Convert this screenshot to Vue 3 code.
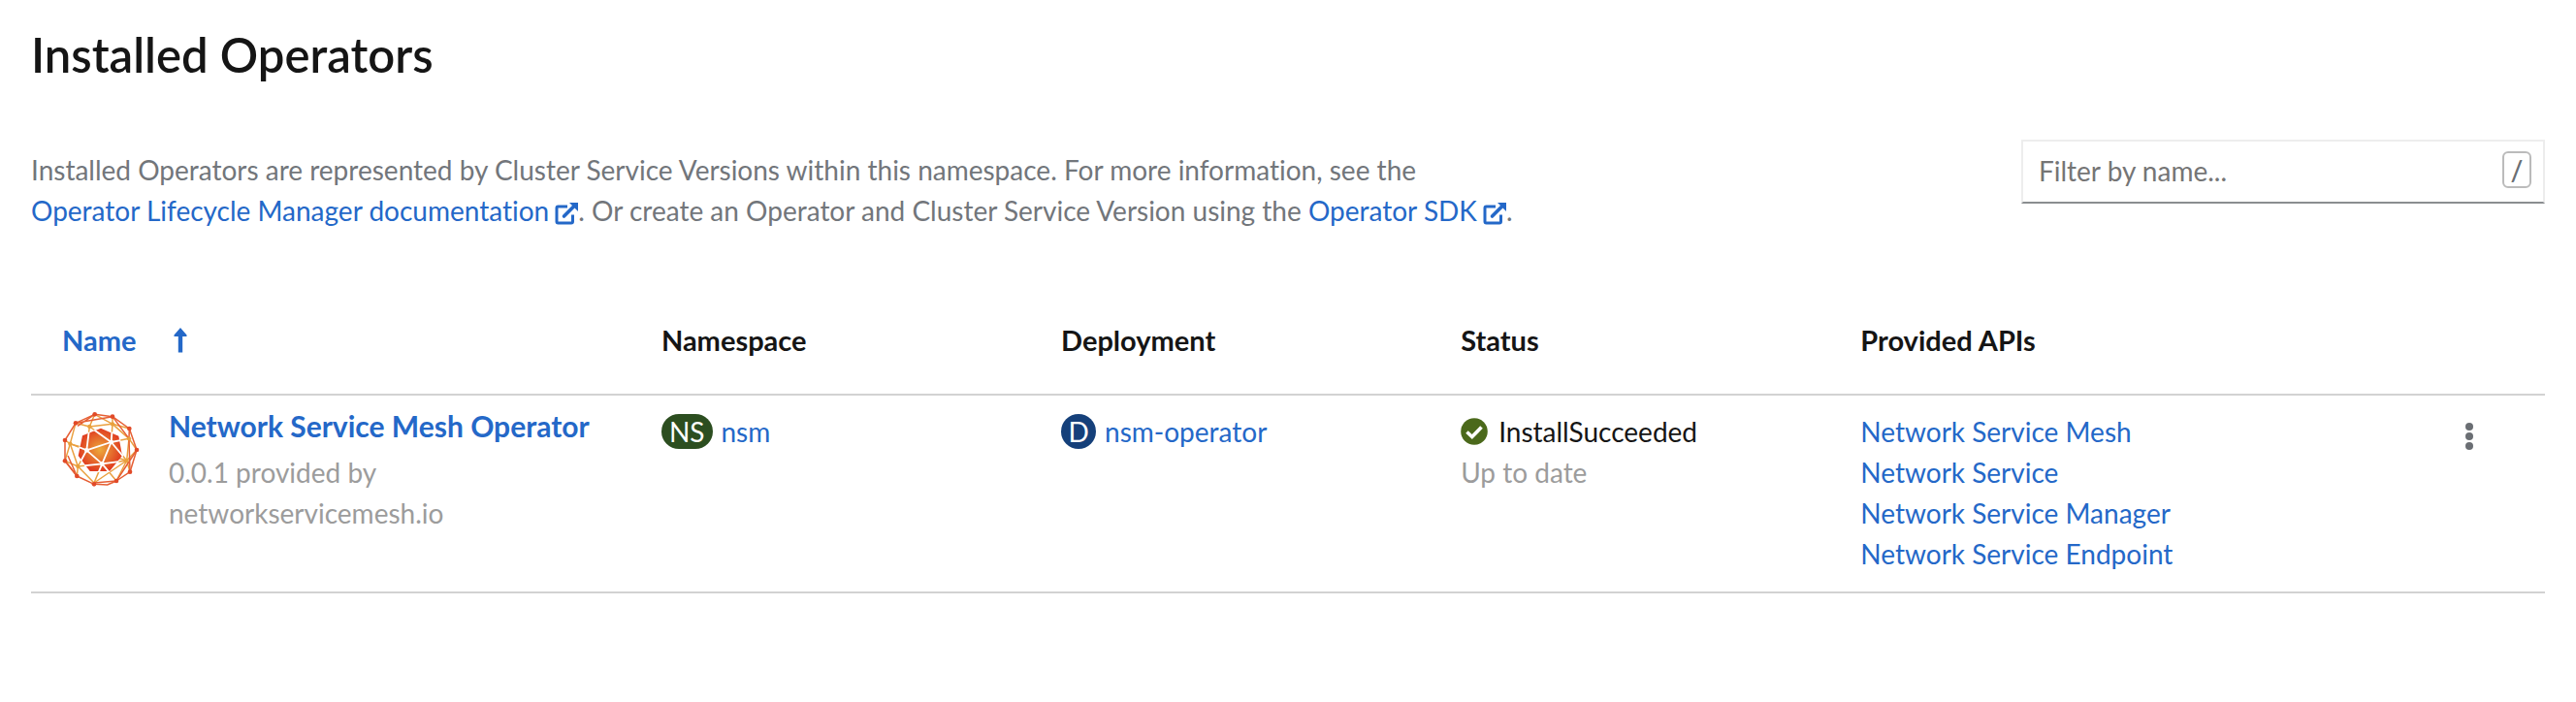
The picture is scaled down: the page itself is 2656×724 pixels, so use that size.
<script setup>
import { ref } from 'vue'

const filter = ref('')
const apis = [
  'Network Service Mesh',
  'Network Service',
  'Network Service Manager',
  'Network Service Endpoint',
]

const outer = [
  [113, 22], [168, 29], [220, 66], [243, 132], [222, 200], [180, 228],
  [111, 238], [58, 213], [21, 166], [21, 102], [54, 49],
]
const inner = [[97, 60], [168, 52], [219, 97], [212, 165], [61, 183], [37, 113]]
</script>

<template>
  <main class="page">
    <h1>Installed Operators</h1>

    <div class="intro">
      <p>
        Installed Operators are represented by Cluster Service Versions within this namespace. For more information, see the<br />
        <a href="#olm">Operator Lifecycle Manager documentation<svg class="ext" viewBox="0 0 24 24" aria-hidden="true"><path d="M13 5H3.500Q2 5 2 6.500V20.500Q2 22 3.500 22H17Q18.500 22 18.500 20.500V13.500" fill="none" stroke="currentColor" stroke-width="3" /><path d="M9.500 15L20 4.500" stroke="currentColor" stroke-width="3.600" stroke-linecap="round" /><path d="M15 1H24V10Z" fill="currentColor" /></svg></a>. Or create an Operator and Cluster Service Version using the
        <a href="#sdk">Operator SDK<svg class="ext" viewBox="0 0 24 24" aria-hidden="true"><path d="M13 5H3.500Q2 5 2 6.500V20.500Q2 22 3.500 22H17Q18.500 22 18.500 20.500V13.500" fill="none" stroke="currentColor" stroke-width="3" /><path d="M9.500 15L20 4.500" stroke="currentColor" stroke-width="3.600" stroke-linecap="round" /><path d="M15 1H24V10Z" fill="currentColor" /></svg></a>.
      </p>
      <div class="filter">
        <input v-model="filter" type="text" placeholder="Filter by name..." aria-label="Filter by name" />
        <kbd>/</kbd>
      </div>
    </div>

    <table>
      <colgroup>
        <col class="c-name" />
        <col class="c-mid" />
        <col class="c-mid" />
        <col class="c-mid" />
        <col />
        <col class="c-menu" />
      </colgroup>
      <thead>
        <tr>
          <th scope="col" aria-sort="ascending">
            <button type="button" class="sort">
              Name
              <svg viewBox="0 0 14 26" aria-hidden="true"><path d="M7 0L13.500 7.500V9H9.200V25.500H4.800V9H0.500V7.500Z" fill="currentColor" /></svg>
            </button>
          </th>
          <th scope="col">Namespace</th>
          <th scope="col">Deployment</th>
          <th scope="col">Status</th>
          <th scope="col">Provided APIs</th>
          <td></td>
        </tr>
      </thead>
      <tbody>
        <tr>
          <td>
            <div class="operator">
              <svg class="logo" viewBox="12 12 240 240" aria-hidden="true">
                <defs>
                  <radialGradient id="core">
                    <stop offset="0" stop-color="#ecaa3c" />
                    <stop offset="1" stop-color="#e03c20" />
                  </radialGradient>
                  <clipPath id="coreClip">
                    <path d="M132 62L190 86L202 150L162 202H96L58 150L72 86Z" />
                  </clipPath>
                </defs>
                <g fill="none" stroke="#eaa040" stroke-width="4.500" stroke-linejoin="round">
                  <path d="M97 60L168 52L219 97L212 165L180 228M212 165L111 234L61 183L37 113Z" />
                  <path d="M97 60L88 133L37 113M97 60L164 108L168 52M164 108L219 97M164 108L212 165L136 175L111 234M136 175L61 183L88 133M136 175L180 228" />
                  <path d="M97 60L113 22M97 60L54 49M168 52L113 22M168 52V29M168 52L220 66M219 97L243 132M212 165L243 132M212 165L222 200M61 183L58 213M61 183L21 166M37 113L21 166M37 113L21 102M37 113L54 49" />
                </g>
                <path d="M132 65L187 89L198 150L159 198H98L62 150L75 88Z" fill="url(#core)" />
                <g fill="none" stroke="#fff" stroke-width="5.500">
                  <path clip-path="url(#coreClip)" d="M97 60L88 133L37 113M97 60L164 108L168 52M164 108L219 97M164 108L212 165L136 175L111 234M136 175L61 183L88 133M136 175L180 228" />
                  <path d="M88 133L164 108L136 175Z" />
                </g>
                <g fill="none" stroke="#e65f34" stroke-width="4.500" stroke-linejoin="round">
                  <path d="M113 22L168 29L220 66L243 132L222 200L180 228L152 240L111 238L58 213L21 166V102L54 49Z" />
                  <path d="M54 49L168 29M220 66L219 97L222 200M168 29L219 97M243 132L180 228L111 234M58 213L21 166M58 213L30 150M113 22L60 58" />
                </g>
                <g fill="#fff">
                  <circle cx="164" cy="108" r="7" /><circle cx="88" cy="133" r="7" /><circle cx="136" cy="175" r="7" />
                </g>
                <circle v-for="p in inner" :key="p.join()" :cx="p[0]" :cy="p[1]" r="6.500" fill="#e8a03c" />
                <circle v-for="p in outer" :key="p.join()" :cx="p[0]" :cy="p[1]" r="7" fill="#e14a28" />
              </svg>
              <div>
                <a href="#operator" class="title">Network Service Mesh Operator</a>
                <div class="muted">0.0.1 provided by<br />networkservicemesh.io</div>
              </div>
            </div>
          </td>
          <td>
            <div class="resource"><span class="badge ns">NS</span><a href="#nsm">nsm</a></div>
          </td>
          <td>
            <div class="resource"><span class="badge d">D</span><a href="#nsm-operator">nsm-operator</a></div>
          </td>
          <td>
            <div class="status">
              <svg viewBox="0 0 28 28" aria-hidden="true"><circle cx="14" cy="14" r="13.800" fill="#4b691b" /><path d="M6.500 14.500L11.800 19.500L21.500 9.500" fill="none" stroke="#fff" stroke-width="3.600" /></svg>
              InstallSucceeded
            </div>
            <div class="muted">Up to date</div>
          </td>
          <td>
            <ul>
              <li v-for="api in apis" :key="api"><a href="#api">{{ api }}</a></li>
            </ul>
          </td>
          <td class="menu">
            <button type="button" aria-label="Actions">
              <svg viewBox="0 0 10 28" aria-hidden="true"><g fill="#6a6e73"><circle cx="5" cy="4" r="4" /><circle cx="5" cy="14" r="4" /><circle cx="5" cy="24" r="4" /></g></svg>
            </button>
          </td>
        </tr>
      </tbody>
    </table>
  </main>
</template>

<style>
body {
  background: #fff;
}
</style>

<style scoped>
.page {
  padding: 26px 32px;
  color: #151515;
  font-family: Lato, "Liberation Sans", sans-serif;
  font-size: 28px;
  line-height: 42px;
  font-variant-ligatures: no-common-ligatures;
}
h1 {
  margin: 0;
  font-size: 49px;
  font-weight: 600;
  line-height: 60px;
}
a {
  color: #2468c8;
  text-decoration: none;
}
button {
  padding: 0;
  border: 0;
  background: none;
  color: inherit;
  font: inherit;
  cursor: pointer;
}
.intro {
  display: flex;
  justify-content: space-between;
  align-items: flex-start;
  gap: 32px;
  margin-top: 58px;
}
.intro p {
  margin: 10px 0 0;
  color: #72767b;
}
.ext {
  width: 24px;
  height: 24px;
  margin-left: 6px;
  vertical-align: -4px;
}
.filter {
  display: flex;
  align-items: center;
  box-sizing: border-box;
  width: 540px;
  height: 66px;
  padding: 0 12px 0 16px;
  border: 2px solid #ededed;
  border-bottom-color: #8a8d90;
}
.filter input {
  flex: 1;
  min-width: 0;
  margin-bottom: 2px;
  padding: 0;
  border: 0;
  outline: 0;
  background: none;
  color: #151515;
  font: inherit;
}
.filter input::placeholder {
  color: #757575;
  opacity: 1;
}
kbd {
  box-sizing: border-box;
  width: 30px;
  height: 38px;
  margin-bottom: 4px;
  border: 2px solid #bbb;
  border-radius: 6px;
  color: #6a6e73;
  font-family: inherit;
  font-size: 28px;
  font-weight: 600;
  line-height: 34px;
  text-align: center;
}
table {
  width: 100%;
  margin-top: 60px;
  border-collapse: collapse;
  table-layout: fixed;
}
.c-name {
  width: 23.84%;
}
.c-mid {
  width: 15.9%;
}
.c-menu {
  width: 6%;
}
tr {
  border-bottom: 2px solid #d2d2d2;
}
th {
  padding: 32px 32px 34px;
  font-size: 29px;
  font-weight: 700;
  text-align: left;
}
.sort {
  display: flex;
  align-items: center;
  gap: 39px;
  color: #2468c8;
}
.sort svg {
  width: 14px;
  height: 26px;
}
tbody td {
  padding: 16px 32px 18px;
  vertical-align: top;
}
.operator {
  display: flex;
  align-items: flex-start;
  gap: 30px;
}
.logo {
  flex: none;
  width: 80px;
  height: 80px;
}
.title {
  display: block;
  margin-bottom: 12px;
  font-size: 30px;
  font-weight: 700;
  line-height: 30px;
}
.muted {
  color: #9c9c9c;
}
.resource {
  display: flex;
  align-items: center;
  gap: 9px;
}
.badge {
  box-sizing: border-box;
  min-width: 36px;
  border-radius: 18px;
  color: #fff;
  line-height: 36px;
  text-align: center;
}
.ns {
  padding: 0 8px;
  background: #2c4e20;
}
.d {
  background: #15407a;
}
.status {
  display: flex;
  align-items: center;
  gap: 11px;
}
.status svg {
  width: 28px;
  height: 28px;
}
ul {
  margin: 0;
  padding: 0;
  list-style: none;
}
tbody .menu {
  padding: 20px 0;
  text-align: center;
}
.menu button {
  display: inline-flex;
  padding: 8px 16px;
}
.menu svg {
  width: 10px;
  height: 28px;
}
</style>
